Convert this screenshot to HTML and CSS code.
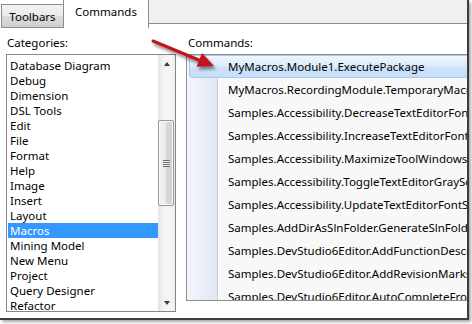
FILE: index.html
```html
<!DOCTYPE html>
<html>
<head>
<meta charset="utf-8">
<link rel="stylesheet" href="styles.css">
</head>
<body>
<div class="dialog">
  <div class="tabstrip">
    <div class="tab tab-inactive">Toolbars</div>
    <div class="tab tab-active">Commands</div>
    <div class="tab-rest"></div>
  </div>
  <div class="panel">
    <div class="col col-cat">
      <div class="label">Categories:</div>
      <div class="listbox">
        <ul class="items">
          <li>Database Diagram</li>
          <li>Debug</li>
          <li>Dimension</li>
          <li>DSL Tools</li>
          <li>Edit</li>
          <li>File</li>
          <li>Format</li>
          <li>Help</li>
          <li>Image</li>
          <li>Insert</li>
          <li>Layout</li>
          <li class="sel">Macros</li>
          <li>Mining Model</li>
          <li>New Menu</li>
          <li>Project</li>
          <li>Query Designer</li>
          <li>Refactor</li>
        </ul>
        <div class="vscroll">
          <div class="sb-btn"><span class="tri-up"></span></div>
          <div class="sb-track">
            <div class="thumb"><span class="grip"></span></div>
          </div>
          <div class="sb-btn"><span class="tri-down"></span></div>
        </div>
      </div>
    </div>
    <div class="col col-cmd">
      <div class="label label-cmd">Commands:</div>
      <div class="cmdlist">
        <div class="row row-sel">MyMacros.Module1.ExecutePackage</div>
        <div class="row">MyMacros.RecordingModule.TemporaryMacro</div>
        <div class="row">Samples.Accessibility.DecreaseTextEditorFontSize</div>
        <div class="row">Samples.Accessibility.IncreaseTextEditorFontSize</div>
        <div class="row">Samples.Accessibility.MaximizeToolWindows</div>
        <div class="row">Samples.Accessibility.ToggleTextEditorGrayScale</div>
        <div class="row">Samples.Accessibility.UpdateTextEditorFontSize</div>
        <div class="row">Samples.AddDirAsSlnFolder.GenerateSlnFolders</div>
        <div class="row">Samples.DevStudio6Editor.AddFunctionDescription</div>
        <div class="row">Samples.DevStudio6Editor.AddRevisionMarks</div>
        <div class="row">Samples.DevStudio6Editor.AutoCompleteFromFile</div>
      </div>
    </div>
  </div>
  <svg class="arrow" width="472" height="324" viewBox="0 0 472 324">
    <line x1="153" y1="41" x2="200" y2="60.5" stroke="#c3141c" stroke-width="3" stroke-linecap="round"/>
    <polygon points="214,66 196.5,66.8 202,53" fill="#c3141c"/>
  </svg>
</div>
</body>
</html>
```

FILE: styles.css
```css
html, body {
  margin: 0;
  padding: 0;
  background: #ffffff;
}
body {
  width: 472px;
  height: 324px;
  overflow: hidden;
  font-family: "Noto Sans", "Open Sans", sans-serif;
  font-size: 11.5px;
  color: #000;
}
.dialog {
  position: relative;
  width: 467px;
  height: 318px;
  background: #ffffff;
  border-right: 2px solid #3d3d3d;
  border-bottom: 2px solid #3d3d3d;
  box-shadow: 2px 2px 3px rgba(0,0,0,0.35);
  overflow: hidden;
}
.tabstrip {
  display: flex;
  align-items: flex-start;
  height: 28px;
}
.tab {
  box-sizing: border-box;
  text-align: center;
  line-height: 15px;
}
.tab-inactive {
  margin-top: 4px;
  margin-left: 1px;
  width: 62px;
  height: 24px;
  padding-top: 4px;
  border: 1px solid #898c95;
  border-right: none;
  background: linear-gradient(#f2f2f2, #ebebeb 50%, #dcdcdc 50%, #cfcfcf);
}
.tab-active {
  width: 86px;
  height: 28px;
  padding-top: 4px;
  background: #ffffff;
  border-left: 1px solid #898c95;
  border-right: 1px solid #898c95;
}
.tab-rest {
  flex: 1;
  height: 24px;
  box-sizing: border-box;
  background: #f0f0f0;
  border-bottom: 1px solid #898c95;
}
.panel {
  display: flex;
  padding-left: 6px;
}
.col-cat {
  width: 172px;
}
.col-cmd {
  margin-left: 10px;
  flex: 1;
}
.label {
  margin-top: 7px;
  height: 15px;
  line-height: 15px;
  padding-left: 1px;
}
.label-cmd {
  padding-left: 2px;
}
.listbox {
  margin-top: 4px;
  box-sizing: border-box;
  height: 258px;
  border: 1px solid #828790;
  display: flex;
  padding-left: 1px;
  overflow: hidden;
}
.items {
  list-style: none;
  margin: 0;
  padding: 3px 0 0 0;
  width: 150px;
}
.items li {
  height: 15px;
  line-height: 15px;
  padding-left: 2px;
  white-space: nowrap;
}
.items li.sel {
  background: #3399ff;
  color: #ffffff;
}
.vscroll {
  margin-left: auto;
  width: 17px;
  display: flex;
  flex-direction: column;
  background: linear-gradient(to right, #e3e3e3, #f3f3f3 30%, #f5f5f5 80%, #ebebeb);
}
.sb-btn {
  height: 17px;
  display: flex;
  align-items: center;
  justify-content: center;
}
.tri-up {
  width: 0;
  height: 0;
  border-left: 3.5px solid transparent;
  border-right: 3.5px solid transparent;
  border-bottom: 4px solid #3a3a3a;
}
.tri-down {
  width: 0;
  height: 0;
  border-left: 3.5px solid transparent;
  border-right: 3.5px solid transparent;
  border-top: 4px solid #3a3a3a;
}
.sb-track {
  flex: 1;
  padding-top: 48px;
}
.thumb {
  box-sizing: border-box;
  width: 16px;
  height: 86px;
  border: 1px solid #979797;
  border-radius: 2px;
  background: linear-gradient(to right, #f4f4f4, #e9e9e9 50%, #d9d9d9 50%, #d2d2d2);
  box-shadow: inset 0 0 0 1px #fbfbfb;
  display: flex;
  align-items: center;
  justify-content: center;
}
.grip {
  width: 7px;
  height: 7px;
  background: repeating-linear-gradient(#6e6e6e 0, #6e6e6e 1px, #f0f0f0 1px, #f0f0f0 2px);
}
.cmdlist {
  margin-top: 4px;
  box-sizing: border-box;
  height: 247px;
  width: 300px;
  border: 1px solid #8e8f8f;
  overflow: hidden;
  background: linear-gradient(to right, #f5f6fc 0, #e2e6f5 30px, #c9ccd6 30px, #c9ccd6 31px, #ffffff 31px, #ffffff 32px, #f8f8f8 32px);
}
.row {
  height: 23px;
  line-height: 23px;
  padding-left: 41px;
  white-space: nowrap;
  box-sizing: border-box;
}
.row-sel {
  margin-left: 2px;
  padding-left: 38px;
  border: 1px solid #a9c8ea;
  border-radius: 3px;
  line-height: 21px;
  background: linear-gradient(#eef5fd, #dcebfb 50%, #cfe3f9 50%, #c6def8);
}
.arrow {
  position: absolute;
  left: 0;
  top: 0;
  pointer-events: none;
  filter: drop-shadow(2px 3px 1.5px rgba(0,0,0,0.45));
}
```
